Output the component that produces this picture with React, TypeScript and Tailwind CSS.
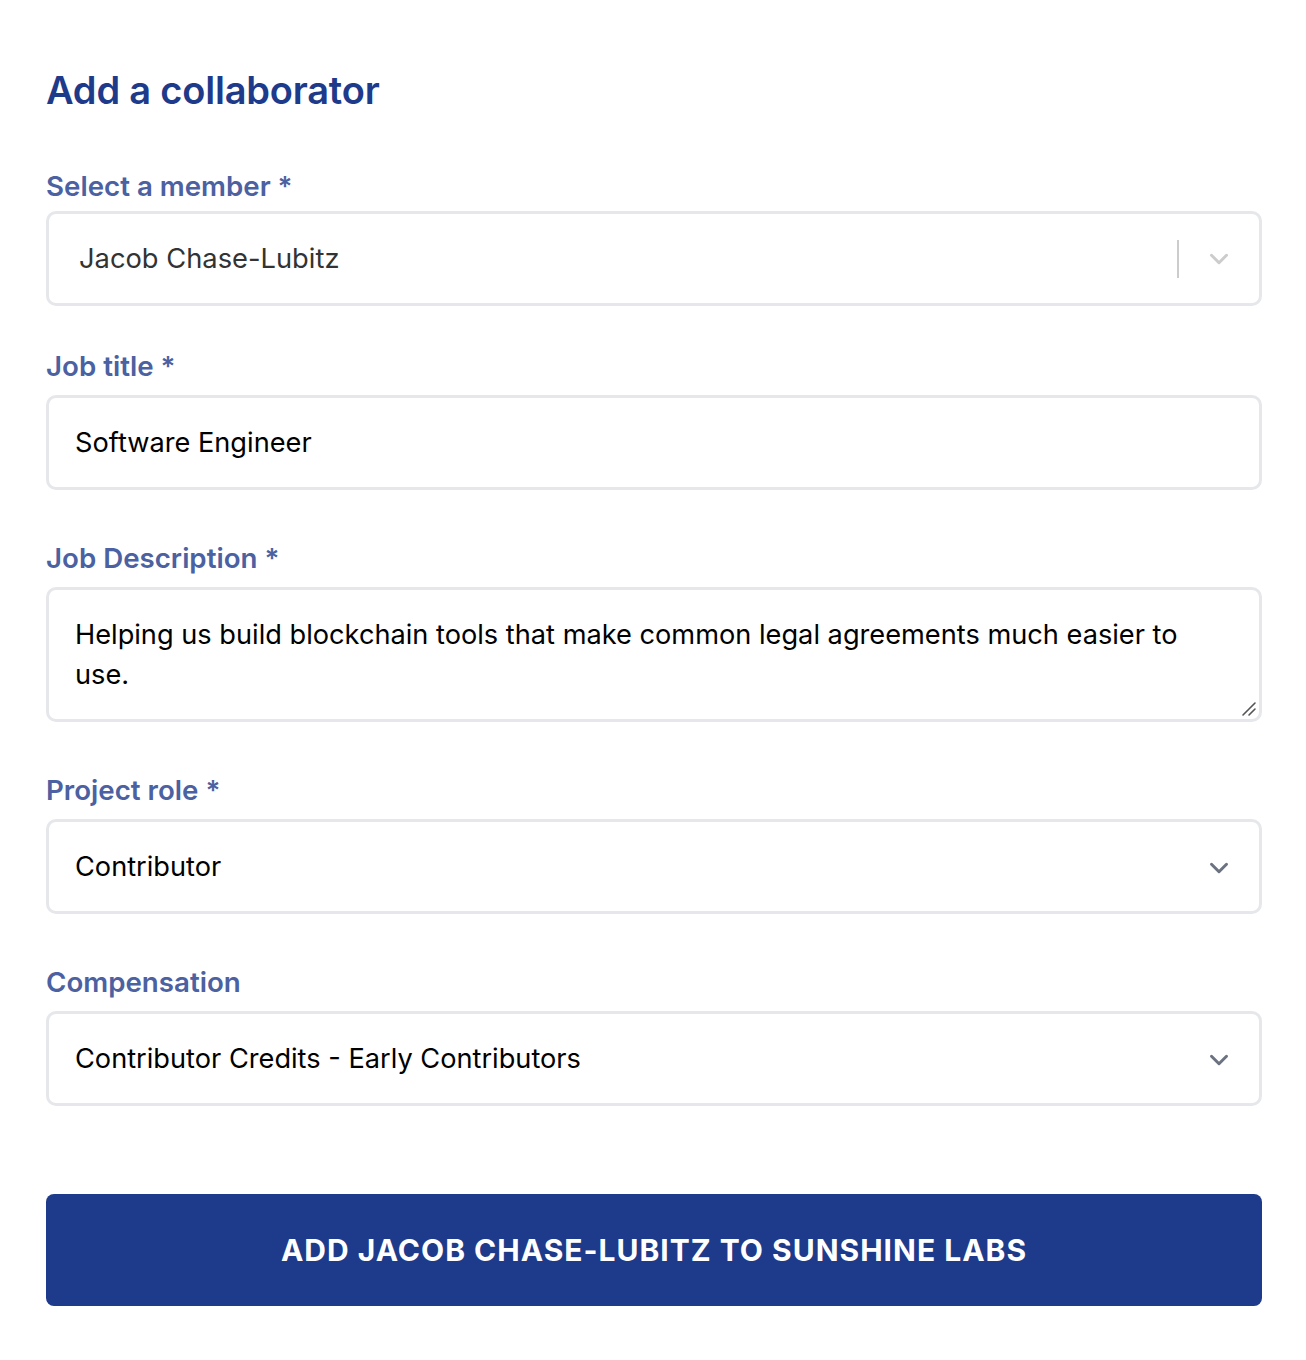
import React from "react";

const Chevron = ({ className }: { className?: string }) => (
  <svg viewBox="0 0 20 20" className={className} fill="none">
    <path d="M5 7.5l5 5 5-5" stroke="currentColor" strokeWidth="2" strokeLinecap="round" strokeLinejoin="round" />
  </svg>
);

const Label = ({ children, mb }: { children: React.ReactNode; mb: string }) => (
  <div className={`text-[27.7px] leading-[36px] font-semibold text-[#4b61a1] ${mb}`}>{children}</div>
);

export default function App() {
  return (
    <div className="min-h-[1360px] bg-white pl-[46px] pr-[44px] pt-[67px] pb-[54px]" style={{ fontFamily: "Inter, 'Noto Sans', sans-serif" }}>
      <h1 className="text-[38px] leading-[46px] font-semibold text-[#1e3a8a] tracking-[-0.2px]">Add a collaborator</h1>

      <div className="mt-[55px]">
        <Label mb="mb-[7px]">Select a member *</Label>
        <div className="h-[95px] border-[3px] border-[#e5e7eb] rounded-[10px] flex items-center">
          <div className="flex-1 pl-[30px] pt-[2px] text-[27.3px] text-[#333333]">Jacob Chase-Lubitz</div>
          <div className="w-[2px] h-[38px] bg-[#cccccc]" />
          <div className="w-[80px] flex justify-center">
            <Chevron className="w-[30px] h-[30px] text-[#cccccc]" />
          </div>
        </div>
      </div>

      <div className="mt-[42px]">
        <Label mb="mb-[11px]">Job title *</Label>
        <div className="h-[95px] border-[3px] border-[#e5e7eb] rounded-[10px] flex items-center px-[26px] pt-[2px] text-[27.2px] text-black">
          Software Engineer
        </div>
      </div>

      <div className="mt-[50px]">
        <Label mb="mb-[11px]">Job Description *</Label>
        <div className="relative h-[135px] border-[3px] border-[#e5e7eb] rounded-[10px] pl-[26px] pr-[40px] pt-[25px] text-[27.2px] leading-[40px] text-black">
          Helping us build blockchain tools that make common legal agreements much easier to use.
          <svg className="absolute right-[2px] bottom-[2px] w-[18px] h-[18px]" viewBox="0 0 18 18">
            <path d="M16 4L4 16M16 10L10 16" stroke="#555" strokeWidth="1.6" strokeLinecap="round" />
          </svg>
        </div>
      </div>

      <div className="mt-[50px]">
        <Label mb="mb-[11px]">Project role *</Label>
        <div className="h-[95px] border-[3px] border-[#e5e7eb] rounded-[10px] flex items-center pl-[26px] pr-[25px] pt-[2px] text-[27.2px] text-black">
          <div className="flex-1">Contributor</div>
          <Chevron className="w-[30px] h-[30px] text-[#6b7280]" />
        </div>
      </div>

      <div className="mt-[50px]">
        <Label mb="mb-[11px]">Compensation</Label>
        <div className="h-[95px] border-[3px] border-[#e5e7eb] rounded-[10px] flex items-center pl-[26px] pr-[25px] pt-[2px] text-[27.2px] text-black">
          <div className="flex-1">Contributor Credits - Early Contributors</div>
          <Chevron className="w-[30px] h-[30px] text-[#6b7280]" />
        </div>
      </div>

      <button className="mt-[88px] w-full h-[112px] rounded-[8px] bg-[#1e3a8a] text-white text-[30px] font-bold uppercase tracking-[1px]">
        Add Jacob Chase-Lubitz to Sunshine Labs
      </button>
    </div>
  );
}
